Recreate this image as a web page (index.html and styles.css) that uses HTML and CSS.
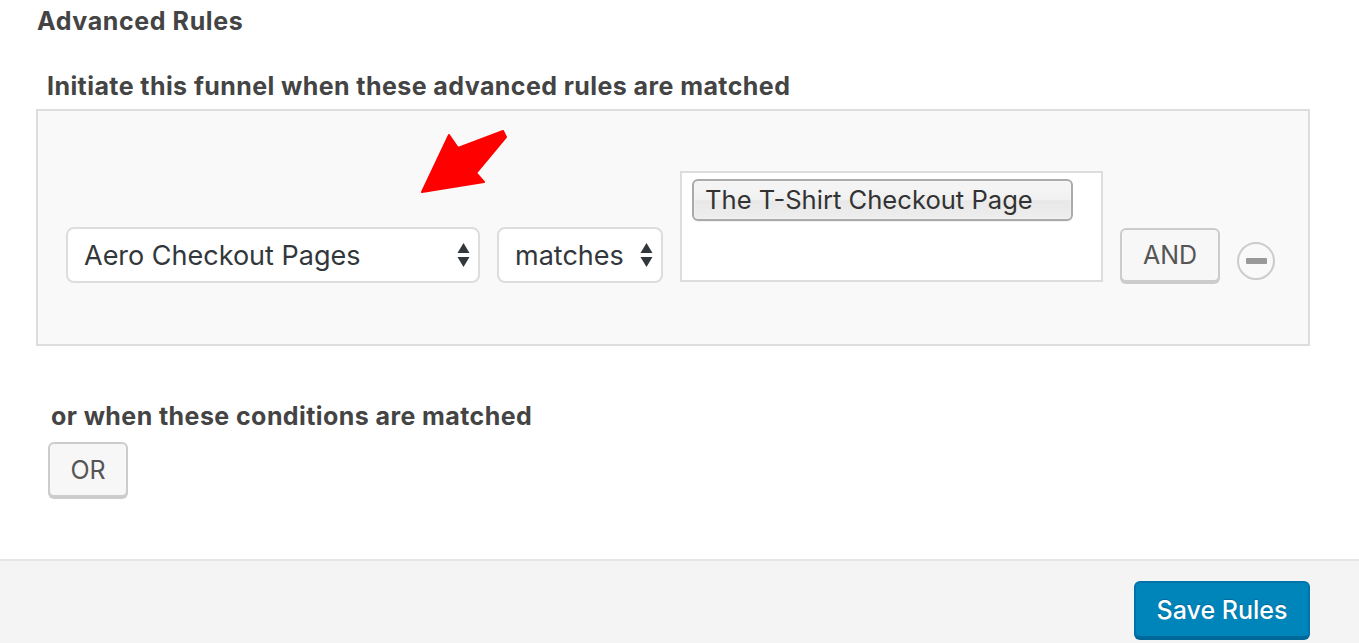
FILE: index.html
```html
<!DOCTYPE html>
<html lang="en">
<head>
  <meta charset="UTF-8" />
  <meta name="viewport" content="width=device-width, initial-scale=1.0" />
  <title>Advanced Rules</title>
  <link rel="stylesheet" href="styles.css">
</head>
<body>
  <div class="content">
    <h2 class="title">Advanced Rules</h2>

    <h3 class="label">Initiate this funnel when these advanced rules are matched</h3>
    <div class="rules-box">
      <svg class="pointer" width="90" height="70" viewBox="0 0 90 70">
        <polygon points="2,62 29,5 38,18 83,1 86,7 56,43 64,52" fill="#ff0000" stroke="#ff0000" stroke-width="2" stroke-linejoin="round" />
      </svg>
      <div class="rule-row">
        <div class="select select-wide">
          <span>Aero Checkout Pages</span>
          <svg class="updown" width="13" height="26" viewBox="0 0 13 26">
            <polygon points="6.5,1 12.5,11 0.5,11" fill="#32373c" />
            <polygon points="0.5,15 12.5,15 6.5,25" fill="#32373c" />
          </svg>
        </div>
        <div class="select select-narrow">
          <span>matches</span>
          <svg class="updown" width="13" height="26" viewBox="0 0 13 26">
            <polygon points="6.5,1 12.5,11 0.5,11" fill="#32373c" />
            <polygon points="0.5,15 12.5,15 6.5,25" fill="#32373c" />
          </svg>
        </div>
        <div class="token-box">
          <span class="token">The T-Shirt Checkout Page</span>
        </div>
        <button class="btn btn-and">AND</button>
        <span class="remove"><span class="remove-bar"></span></span>
      </div>
    </div>

    <h3 class="label label-or">or when these conditions are matched</h3>
    <button class="btn btn-or">OR</button>
  </div>

  <div class="footer">
    <button class="btn-primary">Save Rules</button>
  </div>
</body>
</html>
```

FILE: styles.css
```css
* {
  box-sizing: border-box;
  margin: 0;
  padding: 0;
}
body {
  font-family: Inter, "Open Sans", sans-serif;
  background-color: #fff;
  color: #444;
}
.content {
  padding: 6px 49px 0 36px;
  height: 559px;
}
.title {
  font-size: 25px;
  line-height: 30px;
  font-weight: 700;
  letter-spacing: 0.6px;
  color: #444;
  margin-left: 1px;
}
.label {
  font-size: 25px;
  line-height: 30px;
  font-weight: 700;
  letter-spacing: 0.42px;
  color: #444;
  margin: 35px 0 8px 11px;
}
.label-or {
  margin: 55px 0 11px 15px;
}
.rules-box {
  position: relative;
  background-color: #f9f9f9;
  border: 2px solid #ddd;
  padding: 60px 28px 62px;
}
.pointer {
  position: absolute;
  left: 382px;
  top: 19px;
}
.rule-row {
  display: flex;
  align-items: flex-end;
  gap: 17px;
}
.select {
  display: flex;
  align-items: center;
  justify-content: space-between;
  height: 56px;
  margin-bottom: -1px;
  background-color: #fff;
  border: 2px solid #ddd;
  border-radius: 8px;
  padding: 0 8px 0 16px;
  font-size: 27px;
  color: #32373c;
}
.select-wide {
  width: 414px;
}
.select-narrow {
  width: 166px;
}
.token-box {
  width: 423px;
  height: 111px;
  background-color: #fff;
  border: 2px solid #ddd;
  padding: 6px 10px;
}
.token {
  display: block;
  width: 381px;
  height: 42px;
  line-height: 38px;
  padding-left: 11px;
  font-size: 25.6px;
  color: #333;
  border: 2px solid #aaa;
  border-radius: 6px;
  background-image: linear-gradient(#f4f4f4 20%, #f0f0f0 50%, #e8e8e8 52%, #eee 100%);
  box-shadow: inset 0 0 2px #fff, 0 1px 0 rgba(0, 0, 0, 0.05);
}
.btn {
  font-family: inherit;
  font-size: 25px;
  color: #555;
  background-color: #f7f7f7;
  border: 2px solid #ccc;
  border-radius: 6px;
  box-shadow: 0 2px 0 #ccc;
  cursor: pointer;
}
.btn-and {
  width: 100px;
  height: 54px;
  margin-bottom: 0;
}
.btn-or {
  width: 80px;
  height: 55px;
  margin-left: 12px;
}
.remove {
  display: flex;
  align-items: center;
  justify-content: center;
  width: 38px;
  height: 38px;
  margin-bottom: 2px;
  border: 2px solid #ccc;
  border-radius: 50%;
}
.remove-bar {
  width: 21px;
  height: 6px;
  background-color: #999;
  border-radius: 1px;
}
.footer {
  display: flex;
  justify-content: flex-end;
  height: 84px;
  padding: 20px 49px 0 0;
  background-color: #f4f4f4;
  border-top: 2px solid #e5e5e5;
}
.btn-primary {
  width: 176px;
  height: 57px;
  font-family: inherit;
  font-size: 25px;
  font-weight: 500;
  color: #fff;
  text-shadow: 0 -1px 1px #006799;
  background-color: #0085ba;
  border: 2px solid #0073aa;
  border-bottom-color: #006799;
  border-radius: 6px;
  box-shadow: 0 2px 0 #006799;
  cursor: pointer;
}
```
